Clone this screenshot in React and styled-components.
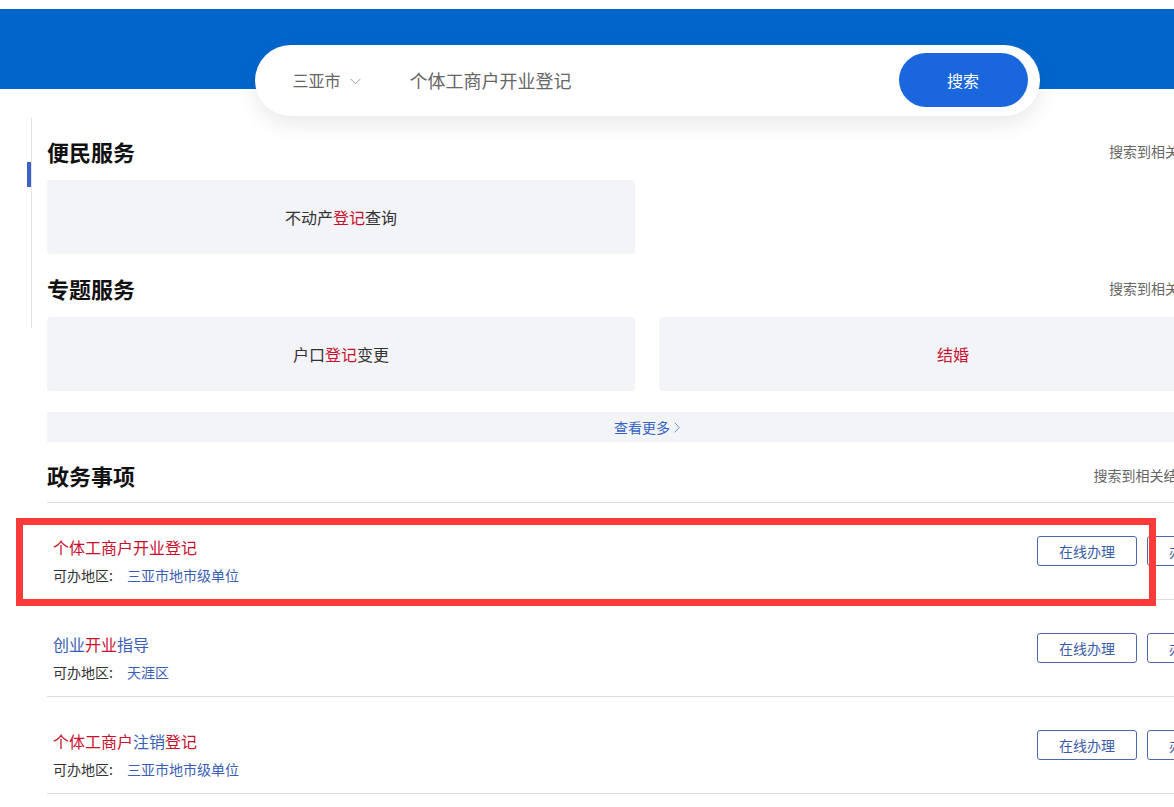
import React from 'react'
import styled, { createGlobalStyle } from 'styled-components'

const GlobalStyle = createGlobalStyle`
  html, body {
    margin: 0;
    padding: 0;
    overflow: hidden;
    background: #fff;
  }
  body {
    font-family: "Noto Sans CJK SC", "Noto Sans", sans-serif;
    color: #333;
  }
`

const RED = '#c8102e'
const BLUE = '#3a5eb6'

const Wrapper = styled.div`
  width: 100%;
  min-height: 807px;
  padding-top: 9px;
  box-sizing: border-box;
`

const Band = styled.div`
  height: 80px;
  background: #0066cc;
`

const Page = styled.div`
  display: flex;
  align-items: flex-start;
  margin-left: 27px;
  width: 1220px;
`

const Sidebar = styled.div`
  flex: 0 0 auto;
  width: 5px;
  height: 210px;
  margin-top: 29px;
  margin-right: 15px;
  padding-top: 44px;
  box-sizing: border-box;
  border-right: 1px solid #e3e3e3;
`

const Marker = styled.div`
  width: 4px;
  height: 25px;
  background: #3b63c6;
`

const Content = styled.div`
  flex: 0 0 1200px;
  width: 1200px;
  display: flex;
  flex-direction: column;
`

const SearchBox = styled.div`
  align-self: center;
  width: 785px;
  height: 71px;
  margin-top: -44px;
  box-sizing: border-box;
  display: flex;
  align-items: center;
  padding: 0 12px 1px 38px;
  background: #fff;
  border-radius: 36px;
  box-shadow: 0 8px 22px rgba(0, 0, 0, 0.09);
`

const City = styled.div`
  display: flex;
  align-items: center;
  gap: 9px;
  font-size: 16px;
  color: #666;
  width: 117px;
  svg {
    margin-top: 2px;
  }
`

const Query = styled.div`
  flex: 1;
  font-size: 18px;
  color: #666;
`

const SearchButton = styled.div`
  width: 129px;
  height: 54px;
  border-radius: 27px;
  background: #1a66dc;
  color: #fff;
  font-size: 16px;
  display: flex;
  align-items: center;
  justify-content: center;
`

const SectionHead = styled.div`
  display: flex;
  justify-content: space-between;
  align-items: center;
  height: 30px;
  margin-top: ${(p) => p.$top}px;
  margin-bottom: ${(p) => (p.$line ? 0 : 2)}px;
  padding-bottom: ${(p) => (p.$line ? 12 : 0)}px;
  border-bottom: ${(p) => (p.$line ? '1px solid #dedede' : 'none')};
`

const SectionTitle = styled.div`
  font-size: 22px;
  font-weight: 700;
  color: #111;
`

const Count = styled.div`
  font-size: 14px;
  color: #666;
  padding-right: 12px;
`

const CardGrid = styled.div`
  display: grid;
  grid-template-columns: 588px 588px;
  gap: 24px;
  margin-top: 12px;
`

const Card = styled.div`
  height: 74px;
  border-radius: 4px;
  background: #f3f4f8;
  display: flex;
  align-items: center;
  justify-content: center;
  font-size: 16px;
  color: #333;
`

const Hit = styled.span`
  color: ${RED};
`

const Plain = styled.span`
  color: ${BLUE};
`

const MoreBar = styled.div`
  margin-top: 21px;
  height: 30px;
  background: #f3f4f8;
  display: flex;
  align-items: center;
  justify-content: center;
  gap: 4px;
  font-size: 14px;
  color: #3563c4;
`

const List = styled.div`
  position: relative;
`

const Row = styled.div`
  display: flex;
  justify-content: space-between;
  align-items: center;
  height: 96px;
  padding-left: 6px;
  border-bottom: 1px solid #dedede;
`

const RowInfo = styled.div`
  display: flex;
  flex-direction: column;
  gap: 7px;
  padding-top: 19px;
`

const RowTitle = styled.div`
  font-size: 16px;
  line-height: 22px;
`

const Region = styled.div`
  font-size: 14px;
  line-height: 20px;
  color: #333;
  span {
    color: ${BLUE};
    margin-left: 14px;
  }
`

const Actions = styled.div`
  display: flex;
  gap: 10px;
`

const ActionButton = styled.div`
  width: 100px;
  height: 30px;
  box-sizing: border-box;
  border: 1px solid #4a67b0;
  border-radius: 3px;
  display: flex;
  align-items: center;
  justify-content: center;
  font-size: 14px;
  color: #3a5ca8;
`

const Highlight = styled.div`
  position: absolute;
  left: -31px;
  top: 15px;
  width: 1140px;
  height: 88px;
  box-sizing: border-box;
  border: 7px solid #fb3a3a;
  pointer-events: none;
`

const Chevron = () => (
  <svg width="11" height="7" viewBox="0 0 11 7" fill="none">
    <polyline points="0.5,0.8 5.5,5.8 10.5,0.8" stroke="#999" strokeWidth="1" />
  </svg>
)

const Arrow = () => (
  <svg width="6" height="11" viewBox="0 0 6 11" fill="none">
    <polyline points="0.6,0.6 5.2,5.5 0.6,10.4" stroke="#6f8fd6" strokeWidth="1" />
  </svg>
)

const items = [
  {
    title: [['个体工商户开业登记', true]],
    region: '三亚市地市级单位',
  },
  {
    title: [
      ['创业', false],
      ['开业', true],
      ['指导', false],
    ],
    region: '天涯区',
  },
  {
    title: [
      ['个体工商户', true],
      ['注销', false],
      ['登记', true],
    ],
    region: '三亚市地市级单位',
  },
]

const App = () => {
  return (
    <Wrapper>
      <GlobalStyle />
      <Band />
      <Page>
        <Sidebar>
          <Marker />
        </Sidebar>
        <Content>
          <SearchBox>
            <City>
              三亚市
              <Chevron />
            </City>
            <Query>个体工商户开业登记</Query>
            <SearchButton>搜索</SearchButton>
          </SearchBox>

          <SectionHead $top={20}>
            <SectionTitle>便民服务</SectionTitle>
            <Count>搜索到相关结果 1 条</Count>
          </SectionHead>
          <CardGrid>
            <Card>
              不动产<Hit>登记</Hit>查询
            </Card>
          </CardGrid>

          <SectionHead $top={19}>
            <SectionTitle>专题服务</SectionTitle>
            <Count>搜索到相关结果 2 条</Count>
          </SectionHead>
          <CardGrid>
            <Card>
              户口<Hit>登记</Hit>变更
            </Card>
            <Card>
              <Hit>结婚</Hit>
            </Card>
          </CardGrid>

          <MoreBar>
            查看更多
            <Arrow />
          </MoreBar>

          <SectionHead $top={18} $line>
            <SectionTitle>政务事项</SectionTitle>
            <Count>搜索到相关结果 128 条</Count>
          </SectionHead>
          <List>
            {items.map((item, i) => (
              <Row key={i}>
                <RowInfo>
                  <RowTitle>
                    {item.title.map(([text, hit], j) =>
                      hit ? <Hit key={j}>{text}</Hit> : <Plain key={j}>{text}</Plain>
                    )}
                  </RowTitle>
                  <Region>
                    可办地区:<span>{item.region}</span>
                  </Region>
                </RowInfo>
                <Actions>
                  <ActionButton>在线办理</ActionButton>
                  <ActionButton>办事指南</ActionButton>
                </Actions>
              </Row>
            ))}
            <Highlight />
          </List>
        </Content>
      </Page>
    </Wrapper>
  )
}

export default App
